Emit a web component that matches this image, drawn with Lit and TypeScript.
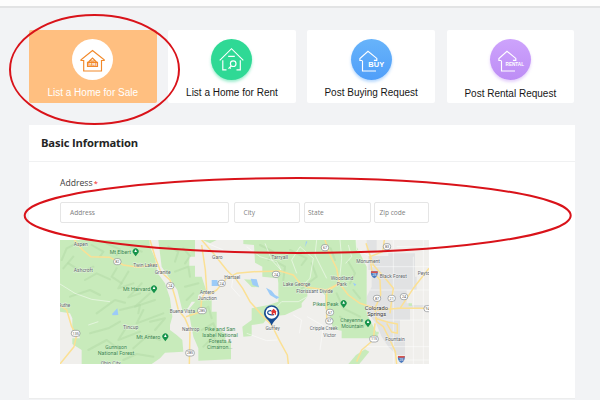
import { LitElement, html, svg, css } from "lit";
import { customElement } from "lit/decorators.js";

type Label = [string, number, number, number, string?];

// Map drawing units: three per CSS pixel.
const GREEN = [
  "M0 0H268L270 20L285 55L293 100L315 130L330 175L337 230L330 255V270L350 285L367 300L370 335L315 338L300 355L275 372H65V330L37 312V295L60 295L52 275L37 272V235L30 220L0 215Z",
  "M295 0H405V50H388V77H405V110H425L440 155L415 165L413 185H395L380 210L368 215L352 150L305 80Z",
  "M428 0H470L450 10Z",
  "M550 0H888L890 20L920 80V220L930 240L955 288L930 295H845V272L820 268L808 225L795 205V165L775 148L742 150V170L725 190V202L675 225L625 230L610 250L575 255V288L550 290L547 260L575 240V205L625 195L655 185L655 130L653 115L607 110V80L585 68L582 15L550 12Z",
  "M385 210L410 180L455 175V215H470V265L495 280L497 302L513 310V358L415 362V325L400 290Z",
  "M552 118L590 120L592 132L598 142L575 141Z",
  "M865 372L888 345L915 328L928 335L898 372Z",
  "M1046 190h10v8h-10zM942 275h14v8h-14z",
];
const URBAN = [
  "M925 48H985V40H1065V110H1070V150H1040V190H1050V240H1020V300H1035V345H1010L985 320L965 290L948 250L920 215V170L935 140V90H925Z",
  "M920 0h30v35h-30zM1042 195h56v12h-56z",
];
const ROADS = [
  "M43 0L68 30L92 50L150 52L190 75L235 82L288 72",
  "M270 0L285 50L302 95L330 120L345 170L355 210L375 235L390 270L388 372",
  "M0 195L20 210L35 260L50 285L42 320L0 372",
  "M425 15L436 90L440 150L425 175L422 215L378 230",
  "M425 0L460 40L500 90L530 120L548 145L570 185L610 230L635 255L660 305L682 345L685 372",
  "M445 165L470 150L500 115L530 100L580 95L660 93L700 105L720 130L742 142L800 150L838 130",
  "M795 0L810 45L830 85L838 130L865 165L900 190L945 205",
  "M800 155L800 250M800 155L838 130",
  "M973 0L968 35L930 50L935 90L960 120L962 165L945 205L950 245L970 260L990 300L1006 335L1010 372",
  "M918 10L940 75L980 120L1000 145L995 180L990 220",
  "M1107 85L1060 145L1020 205L950 210M1010 205H1107",
  "M945 235L985 247L1012 252L1012 280L995 276L980 250",
  "M945 250L940 300L905 330L890 365",
];
const MINOR = [
  "M0 132L45 160L95 178L150 185M85 255L115 245",
  "M442 10L490 30M560 20L600 50L650 65L663 90",
  "M663 90L635 60L615 10M710 100L695 60L720 20L760 55L750 115L725 140",
  "M770 0L765 45L785 85L800 115M840 0L845 55L838 125M865 15L875 50L857 70",
  "M650 200L665 185L715 185L742 170M520 105L515 142L540 170",
  "M742 230L790 258L780 330M700 225L725 240L718 280M560 280L620 302L652 300",
  "M888 0L890 30L930 48M1000 0V372M1060 50V372M1090 0V372",
  "M930 80H1107M930 150H1107M960 240H1107M920 320H1107M1010 20H1107M1010 360H1107",
];
const RELIEF = [
  "M95 15L130 35L120 50M140 10L180 28L170 45M200 15L245 35M25 70L65 95L100 80M75 120L110 100L150 118M170 85L155 110L185 130",
  "M5 60L20 25L50 10M10 85L40 50M205 95L175 145L220 130M245 130L205 172L240 160M270 160L225 200L285 180M30 170L90 150L120 165M110 220L165 180L195 188",
  "M180 210L240 195L235 220M250 210L230 250L310 220M270 245L315 235L285 270M200 260L175 300L240 275M90 280L145 265L180 245M85 330L140 300L180 330M220 325L265 285L300 300M190 360L230 342L280 350",
  "M325 20L355 35L345 65M370 25L390 48L375 70M345 95L385 80L390 110M375 140L415 130M380 180L400 160",
  "M420 220L445 200L455 235M425 270L460 250L470 275M430 320L460 290L480 320",
  "M600 15L640 35L625 60M630 55L675 80L670 120M690 30L740 55L725 75M755 70L770 110L725 145M812 25L825 60M865 65L885 100L870 130M880 150L900 175M830 160L850 205L900 230M840 230L885 265L915 255",
];
const WATER = [
  "M156 222L172 205L175 225L158 226Z",
  "M455 120H472L475 138H455Z",
  "M572 116L590 118L597 142L578 135Z",
  "M618 143L635 152L645 165L658 172L650 177L630 165Z",
  "M742 5L735 22L738 4ZM879 128l10 5l-5 6z",
];
const LABELS: Label[] = [
  ["Aspen", 62, 18, 42], ["Ashcroft", 70, 96, 57], ["Twin Lakes", 256, 81, 73],
  ["Granite", 308, 103, 48], ["Tincup", 212, 268, 46], ["Ohio City", 152, 375, 60],
  ["Tarryall", 659, 58, 50], ["Garo", 472, 58, 32], ["Hartsel", 517, 116, 48],
  ["Antero", 441, 163, 44], ["Junction", 442, 180, 57], ["Buena Vista", 367, 218, 76],
  ["Nathrop", 392, 272, 52], ["Lake George", 710, 137, 82], ["Florissant Divide", 764, 158, 110],
  ["Guffey", 638, 270, 43], ["Monument", 924, 70, 71], ["Black Forest", 1000, 115, 82],
  ["Woodland", 846, 120, 68], ["Park", 845, 137, 30], ["Peyton", 1095, 104, 43],
  ["Cripple Creek", 791, 270, 83], ["Victor", 809, 290, 38], ["Fountain", 1005, 304, 58],
  ["Ruthe", 13, 200, 36],
  ["Mt Elbert", 181, 42, 64, "park"], ["Mt Harvard", 230, 152, 82, "park"],
  ["Mt Antero", 265, 297, 72, "park"], ["Gunnison", 168, 327, 65, "park"],
  ["National Forest", 168, 345, 110, "park"],
  ["Pike and San", 480, 272, 92, "park"], ["Isabel National", 480, 290, 107, "park"],
  ["Forests &", 480, 309, 68, "park"], ["Cimarron...", 479, 327, 76, "park"],
  ["Pikes Peak", 797, 197, 77, "park"], ["Cheyenne", 875, 247, 68, "park"],
  ["Mountain", 877, 265, 67, "park"],
  ["Colorado", 949, 209, 70, "town"], ["Springs", 950, 229, 57, "town"],
];
const TREES: [number, number][] = [[227, 35], [282, 146], [316, 290], [851, 190], [924, 248]];
const SHIELDS: [string, number, number][] = [
  ["82", 172, 65], ["24", 331, 137], ["135", 47, 280], ["24", 485, 130], ["24", 648, 103],
  ["285", 426, 212], ["285", 390, 339], ["67", 795, 23], ["83", 981, 20], ["87", 951, 175],
  ["21", 995, 175], ["24", 1032, 170], ["67", 810, 217], ["67", 808, 243], ["115", 942, 297],
  ["94", 1103, 206],
];

@customElement("area-map")
class AreaMap extends LitElement {
  static styles = css`
    :host { display: block; }
    svg { display: block; width: 100%; height: 100%; }
    text { font-family: Roboto, "Liberation Sans", sans-serif; font-size: 16.5px; fill: #60666b;
      text-anchor: middle; stroke: #fff; stroke-opacity: .55; stroke-width: 3px; paint-order: stroke; }
    .park { fill: #3d8751; stroke-opacity: .15; }
    .town { font-size: 17.5px; fill: #333; }
    .num { font-size: 11px; fill: #555; stroke: none; }
    .inter { fill: #fff; }
    .green { fill: #c8ebbb; }
    .urban { fill: #e1e2e3; }
    .relief { fill: none; stroke: #b2d9a5; stroke-width: 6; stroke-linejoin: round; stroke-linecap: round; opacity: .5; }
    .water { fill: #9ccbf8; }
    .minor { fill: none; stroke: #fff; stroke-width: 2.5; opacity: .6; }
    .road { fill: none; stroke: #fbe094; stroke-width: 4.5; stroke-linejoin: round; }
    .shield { fill: #fff; stroke: #85898c; stroke-width: 2; }
  `;
  render() {
    return html`<svg viewBox="0 0 1107 372" preserveAspectRatio="none">
      <rect width="1107" height="372" fill="#f0efec"></rect>
      ${URBAN.map((d) => svg`<path class="urban" d=${d}></path>`)}
      ${GREEN.map((d) => svg`<path class="green" d=${d}></path>`)}
      ${RELIEF.map((d) => svg`<path class="relief" d=${d}></path>`)}
      ${WATER.map((d) => svg`<path class="water" d=${d}></path>`)}
      ${MINOR.map((d) => svg`<path class="minor" d=${d}></path>`)}
      ${ROADS.map((d) => svg`<path class="road" d=${d}></path>`)}
      ${SHIELDS.map(([n, x, y]) => svg`
        <rect class="shield" x=${x - (n.length > 2 ? 13 : 11)} y=${y - 9} width=${n.length > 2 ? 26 : 22} height="18" rx="8"></rect>
        <text class="num" x=${x} y=${y + 4}>${n}</text>`)}
      ${[[943, 104], [1024, 358]].map(([x, y]) => svg`
        <path d="M${x - 10} ${y - 10}h20q3 14-10 21q-13-7-10-21z" fill="#4979bd"></path>
        <path d="M${x - 10} ${y - 10}h20v5h-20z" fill="#d9534b"></path>
        <text class="num inter" x=${x} y=${y + 5}>25</text>`)}
      ${TREES.map(([x, y]) => svg`
        <path d="M${x} ${y + 14}l-7-9a9 9 0 1 1 14 0z" fill="#16934b"></path>
        <path d="M${x} ${y - 7}l4 8h-8z" fill="#fff"></path>`)}
      ${LABELS.map(([t, x, y, w, c]) => svg`<text class=${c ?? ""} x=${x} y=${y} textLength=${w} lengthAdjust="spacingAndGlyphs">${t}</text>`)}
      <path d="M635 257C628 238 612 235 612 219a23 23 0 0 1 46 0C658 235 642 238 635 257Z" fill="#174b91"></path>
      <circle cx="635" cy="218" r="18" fill="#fff"></circle>
      <path d="M634 212q-11-1-11 6q1 8 19 6" fill="none" stroke="#174b91" stroke-width="3.5"></path>
      <path d="M632 215l9-9l9 9h-2v9h-4v-5h-4v5h-5v-9z" fill="#e13532"></path>
    </svg>`;
  }
}

const OUTLINE = svg`<path d="M-9 1.5V11.5H4.5M-9 1H-11.6V-1L-3.5-8.3L5.3-1.1V.8H2.4"></path>`;
const ICONS = {
  sale: svg`<path d="M0-9L11.7.2V1H9V11.5H-8.8V1H-11.5V.2Z"></path>
    <path d="M-5 2.8H5V7H-5ZM-4 2.5L0-1.5L4 2.5M-2 1.5H2"></path>
    <text class="tiny" x="0" y="6.3">SALE</text>`,
  rent: svg`<path d="M-5 10.4H-8.7V.8M5 10.4H8.8V.8M-11.8.8L0-10.8L11.8.8M-3.3-3.2H3.3"></path>
    <circle cx="1.7" cy="4.2" r="2.8"></circle><path d="M-.3 6.3L-3 9.2M-1.8 7.8L-.7 9"></path>`,
  buy: svg`${OUTLINE}<text class="word" x="4.8" y="7.3" textLength="16">BUY</text>`,
  rental: svg`${OUTLINE}<text class="long" x="4.3" y="6.4" textLength="18.5" lengthAdjust="spacingAndGlyphs">RENTAL</text>`,
};
const CARDS: [keyof typeof ICONS, string][] = [
  ["sale", "List a Home for Sale"], ["rent", "List a Home for Rent"],
  ["buy", "Post Buying Request"], ["rental", "Post Rental Request"],
];

@customElement("app-root")
class AppRoot extends LitElement {
  static styles = css`
    :host { display: block; position: relative; width: 600px; height: 400px; overflow: hidden;
      background: #f2f3f5; font-family: "Liberation Sans", Arial, sans-serif; }
    * { box-sizing: border-box; }
    .top { height: 8px; background: #fdfdfd; border-bottom: 2px solid #e2e3e4; }
    .cards { display: grid; grid-template-columns: repeat(4, 127.5px); gap: 11.7px;
      padding: 22px 0 0 29px; }
    .card { height: 72.5px; border-radius: 2px; background: #fff; padding-top: 8.5px;
      display: flex; flex-direction: column; align-items: center; color: #161616; }
    .icon { width: 41px; height: 41px; border-radius: 50%; display: block; fill: none; stroke: #fff;
      stroke-width: 1.15; overflow: visible; flex: none; }
    .name { font-size: 10px; line-height: 12px; margin-top: 7px; white-space: nowrap; }
    .sale { background: #ffbf80; color: #fff; }
    .sale .icon { background: #fff; stroke: #f2892a; position: relative; left: -.5px; }
    .rent .icon { background: #2fd995; box-shadow: 0 2px 3px #2fd99577; }
    .buy .icon { background: linear-gradient(#67b3fa, #509ff9); box-shadow: 0 2px 3px #509ff966; }
    .rental .icon { background: linear-gradient(#cda3fc, #bd8df5); box-shadow: 0 2px 3px #bd8df566; }
    .rental .name { margin-top: 8px; }
    .icon text { stroke: none; fill: #fff; text-anchor: middle; font-weight: 700;
      font-family: "Liberation Sans", sans-serif; }
    .icon .word { font-size: 7.5px; }
    .icon .long { font-size: 5px; }
    .icon .tiny { font-size: 3.5px; fill: #f2892a; }
    .panel { margin: 22.5px 25px 0 29px; height: 274px; background: #fff;
      border-bottom: 1px solid #eceded; font-family: "Open Sans", "Noto Sans", sans-serif; }
    .title { height: 37px; margin: 0; padding: 0 12px; line-height: 36px; font-size: 11.2px;
      letter-spacing: -.15px; font-weight: 700; color: #242424; border-bottom: 1px solid #f0f1f2; }
    .body { padding: 14px 31px 0; }
    .label { font-size: 8.6px; line-height: 14px; color: #3c3c3c; }
    .star { color: #f32222; font-size: 7.5px; margin-left: -1px; }
    .fields { display: flex; margin-top: 12px; height: 21px; }
    .field { border: 1px solid #e5e5e5; border-radius: 2px; font-size: 6.6px; line-height: 19px;
      color: #808080; padding-left: 9px; }
    .address { width: 169px; margin-right: 5px; }
    .city { width: 65.5px; margin-right: 4.5px; padding-left: 8.5px; }
    .state { width: 67px; margin-right: 3px; padding-left: 3px; }
    .zip { width: 54.5px; padding-left: 4.5px; }
    area-map { width: 369px; height: 124px; margin-top: 16.5px; }
    .marks { position: absolute; inset: 0; width: 600px; height: 400px; fill: none;
      stroke: #d9131a; stroke-width: 2; }
  `;
  render() {
    return html`
      <div class="top"></div>
      <div class="cards">
        ${CARDS.map(([id, name]) => html`<div class="card ${id}">
          <svg class="icon" viewBox="-20.5 -20.5 41 41">${ICONS[id]}</svg>
          <div class="name">${name}</div>
        </div>`)}
      </div>
      <section class="panel">
        <h2 class="title">Basic Information</h2>
        <div class="body">
          <div class="label">Address <span class="star">*</span></div>
          <div class="fields">
            <div class="field address">Address</div>
            <div class="field city">City</div>
            <div class="field state">State</div>
            <div class="field zip">Zip code</div>
          </div>
          <area-map></area-map>
        </div>
      </section>
      <svg class="marks" viewBox="0 0 600 400">
        <ellipse cx="94.5" cy="69.5" rx="84.5" ry="54.5"></ellipse>
        <ellipse cx="297.7" cy="215.5" rx="273" ry="37.5"></ellipse>
      </svg>`;
  }
}
